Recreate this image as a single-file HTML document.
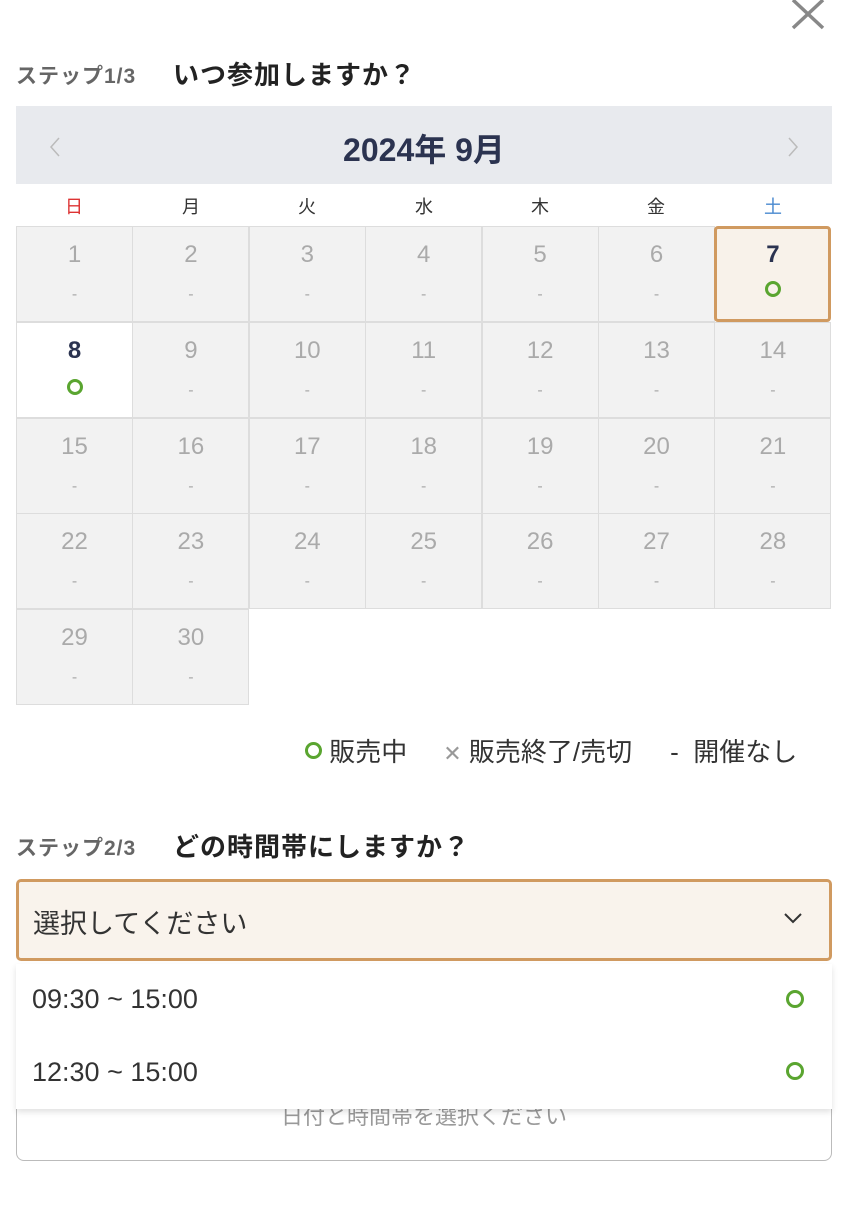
<!DOCTYPE html>
<html><head><meta charset="utf-8"><style>
*{margin:0;padding:0;box-sizing:border-box}
body{width:848px;height:1215px;background:#fff;font-family:"Liberation Sans","Noto Sans CJK JP",sans-serif;position:relative;overflow:hidden;color:#222}
.a{position:absolute}
.step{font-size:21px;font-weight:bold;color:#666;letter-spacing:1px}
.ttl{font-size:26px;font-weight:bold;color:#222;letter-spacing:1px}
.cell{position:absolute;width:117px;height:96px;background:#f2f2f2;border:1px solid #ddd;text-align:center;color:#aaa}
.cell .n{font-size:24px;margin-top:14px;line-height:28px}
.cell .d{font-size:16px;margin-top:16px;line-height:20px}
.ring{display:inline-block;width:16px;height:16px;border:3px solid #5aa530;border-radius:50%}
.wd{position:absolute;top:193px;width:116px;text-align:center;font-size:18px;color:#333}
</style></head><body>
<svg class="a" style="left:790px;top:0" width="36" height="30"><path d="M3 0 L33 28 M33 0 L3 28" stroke="#888" stroke-width="3.5"/></svg>
<div class="a step" style="left:16px;top:60px">ステップ1/3</div>
<div class="a ttl" style="left:173px;top:55px">いつ参加しますか？</div>
<div class="a" style="left:16px;top:106px;width:816px;height:78px;background:#e8eaee"></div>
<svg class="a" style="left:48px;top:136px" width="14" height="22"><path d="M11 2 L3 11 L11 20" stroke="#bbb" stroke-width="1.5" fill="none"/></svg>
<svg class="a" style="left:786px;top:136px" width="14" height="22"><path d="M3 2 L11 11 L3 20" stroke="#bbb" stroke-width="1.5" fill="none"/></svg>
<div class="a" style="left:0;width:848px;top:125px;text-align:center;font-size:32px;font-weight:bold;color:#2b3350">2024年 9月</div>
<div class="wd" style="left:16px;color:#d33">日</div><div class="wd" style="left:133px">月</div><div class="wd" style="left:249px">火</div><div class="wd" style="left:366px">水</div><div class="wd" style="left:482px">木</div><div class="wd" style="left:598px">金</div><div class="wd" style="left:715px;color:#4a8ad0">土</div>
<div id="g"></div>
<script>
var h='';for(var d=1;d<=30;d++){var i=d-1,c=i%7,r=Math.floor(i/7);var x=16+c*116.4,y=226+r*95.8;
var st='left:'+x+'px;top:'+y+'px;';var inner;
if(d==7){st+='background:#f8f2ea;border:3px solid #d09a60;border-radius:4px;';inner='<div class="n" style="color:#2b3350;font-weight:bold;margin-top:12px">7</div><div class="d" style="margin-top:12px"><span class="ring"></span></div>';}
else if(d==8){st+='background:#fff;';inner='<div class="n" style="color:#2b3350;font-weight:bold">8</div><div class="d" style="margin-top:14px"><span class="ring"></span></div>';}
else inner='<div class="n">'+d+'</div><div class="d">-</div>';
h+='<div class="cell" style="'+st+'">'+inner+'</div>';}
document.getElementById('g').innerHTML=h;
</script>
<div class="a" style="left:305px;top:732px;font-size:26px;color:#333;white-space:nowrap"><span class="ring" style="width:17px;height:17px;vertical-align:2px"></span> 販売中<span style="display:inline-block;width:36px"></span><span style="color:#999;font-size:22px">✕</span> 販売終了/売切<span style="display:inline-block;width:38px"></span>-&nbsp; 開催なし</div>
<div class="a step" style="left:16px;top:832px">ステップ2/3</div>
<div class="a ttl" style="left:173px;top:827px">どの時間帯にしますか？</div>
<div class="a" style="left:16px;top:1040px;width:816px;height:121px;border:1.5px solid #bbb;border-radius:8px;text-align:center;padding-top:58px;font-size:22px;color:#999">日付と時間帯を選択ください</div>
<div class="a" style="left:16px;top:879px;width:816px;height:82px;background:#f9f3ec;border:3px solid #d09a60;border-radius:5px"></div>
<div class="a" style="left:33px;top:902px;font-size:27px;color:#333">選択してください</div>
<svg class="a" style="left:783px;top:910px" width="20" height="16"><path d="M2 4 L10 12 L18 4" stroke="#333" stroke-width="2" fill="none"/></svg>
<div class="a" style="left:16px;top:964px;width:816px;height:145px;background:#fff;box-shadow:0 3px 6px rgba(0,0,0,.12)"></div>
<div class="a" style="left:32px;top:984px;font-size:27px;color:#333">09:30 ~ 15:00</div>
<div class="a" style="left:32px;top:1057px;font-size:27px;color:#333">12:30 ~ 15:00</div>
<span class="a ring" style="left:786px;top:990px;width:18px;height:18px"></span>
<span class="a ring" style="left:786px;top:1062px;width:18px;height:18px"></span>
</body></html>
